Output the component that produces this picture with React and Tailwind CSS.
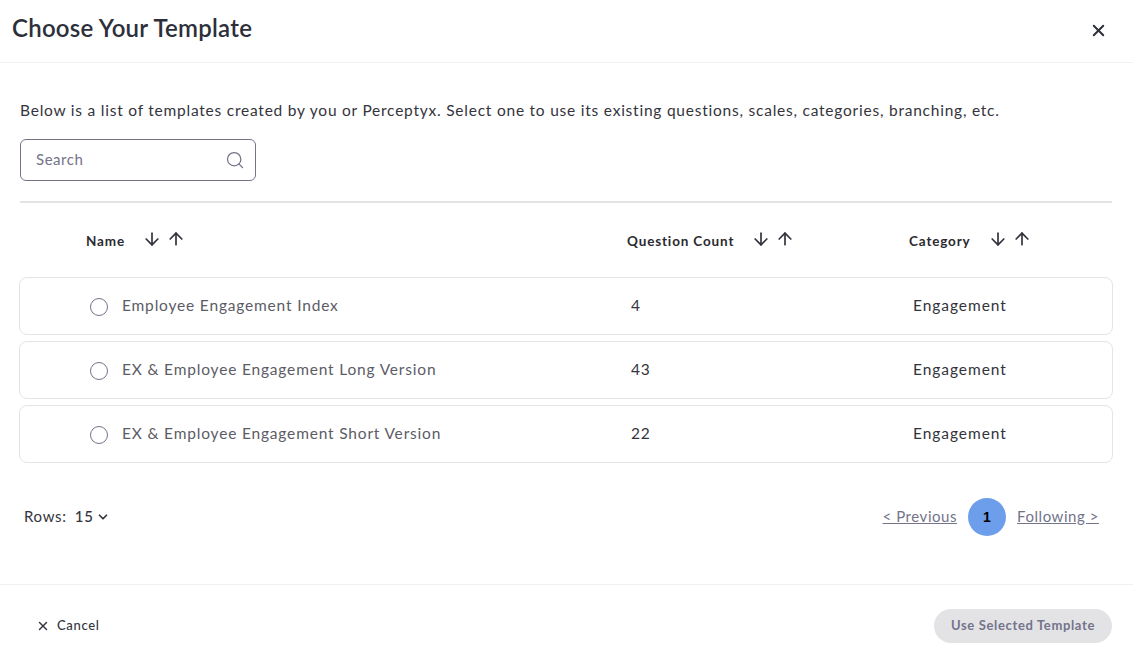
import { ArrowDown, ArrowUp, ChevronDown, Search, X } from 'lucide-react';

const templates = [
  { name: 'Employee Engagement Index', count: 4, category: 'Engagement' },
  { name: 'EX & Employee Engagement Long Version', count: 43, category: 'Engagement' },
  { name: 'EX & Employee Engagement Short Version', count: 22, category: 'Engagement' },
];

function SortArrows() {
  return (
    <div className="flex items-center gap-1 text-[#2f303a] mt-[-4px]">
      <ArrowDown className="w-5 h-5" strokeWidth={2} />
      <ArrowUp className="w-5 h-5" strokeWidth={2} />
    </div>
  );
}

function TemplateRow({ name, count, category }) {
  return (
    <div className="grid grid-cols-[611px_282px_1fr] items-center h-[58px] border border-[#e4e4e7] rounded-lg text-[15.5px] tracking-[0.82px]">
      <div className="flex items-center pl-[70px] text-[#5c5c66]">
        <span className="w-[18px] h-[18px] rounded-full border border-[#73738a] mt-0.5" />
        <span className="ml-[14px]">{name}</span>
      </div>
      <div className="text-[#34343c]">{count}</div>
      <div className="text-[#34343c] tracking-[0.95px]">{category}</div>
    </div>
  );
}

export default function App() {
  return (
    <div className="w-[1133px] h-[664px] bg-white flex flex-col font-['Lato','Open_Sans',sans-serif] overflow-hidden">
      <header className="flex items-center justify-between h-[63px] shrink-0 border-b border-[#f1f1f3] pl-3 pr-[25px] pb-1.5">
        <h1 className="text-[24px] font-semibold text-[#2d2f3a] tracking-[0.25px]">Choose Your Template</h1>
        <X className="w-[19px] h-[19px] text-[#2d2f3a] mt-1" strokeWidth={2.5} />
      </header>

      <main className="flex-1 flex flex-col px-5">
        <p className="mt-[37px] text-[15.5px] leading-5 text-[#34343c] tracking-[0.77px] whitespace-nowrap">
          Below is a list of templates created by you or Perceptyx. Select one to use its existing questions, scales, categories, branching, etc.
        </p>

        <div className="mt-[19px] w-[236px] h-[42px] flex items-center justify-between border border-[#73738a] rounded-md pl-[15px] pr-[10px] pb-0.5">
          <span className="text-[15px] text-[#73738a] tracking-[0.55px]">Search</span>
          <Search className="w-5 h-5 text-[#73738a] mt-0.5" strokeWidth={1.5} />
        </div>

        <div className="mt-5 h-0.5 bg-[#e4e4e7] w-[1092px]" />

        <div className="grid grid-cols-[541px_282px_1fr] items-center h-[74px] pl-[66px] pt-0.5 text-[13.5px] font-bold text-[#2a2a30] tracking-[0.85px]">
          <div className="flex items-center gap-[17px]">Name <SortArrows /></div>
          <div className="flex items-center gap-[17px]">Question Count <SortArrows /></div>
          <div className="flex items-center gap-[17px]">Category <SortArrows /></div>
        </div>

        <div className="flex flex-col gap-1.5 -mx-px w-[1094px]">
          {templates.map((t) => (
            <TemplateRow key={t.name} {...t} />
          ))}
        </div>

        <div className="flex items-center justify-between mt-[35px] h-[38px] pl-1 pr-[14px]">
          <div className="flex items-center text-[15px] text-[#34343c] tracking-[0.7px] pb-0.5">
            <span>Rows:</span>
            <span className="ml-2 font-medium">15</span>
            <ChevronDown className="w-3.5 h-3.5 ml-0.5 mt-0.5" strokeWidth={3} />
          </div>
          <div className="flex items-center gap-[11px] text-[15px] text-[#73738a] tracking-[0.55px]">
            <span className="underline -mt-0.5">&lt; Previous</span>
            <span className="w-[38px] h-[38px] rounded-full bg-[#6d9eeb] flex items-center justify-center text-sm font-bold text-black font-['Liberation_Sans',sans-serif]">1</span>
            <span className="underline -mt-0.5">Following &gt;</span>
          </div>
        </div>
      </main>

      <footer className="flex items-center justify-between h-[80px] shrink-0 border-t border-[#f1f1f3] pl-9 pr-[21px] pt-0.5">
        <div className="flex items-center gap-[7px] text-[13px] font-medium text-[#34343c] tracking-[0.65px]">
          <X className="w-3.5 h-3.5" strokeWidth={2.5} />
          Cancel
        </div>
        <div className="w-[178px] h-[34px] rounded-full bg-[#e3e3e6] flex items-center justify-center text-[13px] font-bold text-[#73738a] tracking-[0.65px]">
          Use Selected Template
        </div>
      </footer>
    </div>
  );
}
